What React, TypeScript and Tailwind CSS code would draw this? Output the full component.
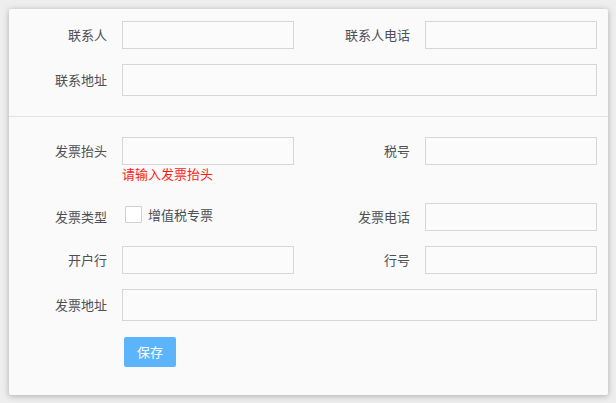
import { useState } from 'react'

const font = { fontFamily: '"Microsoft YaHei", "Noto Sans CJK SC", sans-serif' }

function Label({ text, w }: { text: string; w: string }) {
  return <label className={`${w} shrink-0 text-right text-[13px] text-[#4b4f56] pr-[15px]`}>{text}</label>
}

function Input({ wide }: { wide?: boolean }) {
  return (
    <input
      className={
        wide
          ? 'w-[475px] h-[32px] border border-[#d6d6d6] bg-[#fbfbfb] outline-none px-2 text-[13px]'
          : 'w-[172px] h-[28px] border border-[#d6d6d6] bg-[#fbfbfb] outline-none px-2 text-[13px]'
      }
    />
  )
}

export default function App() {
  const [vat, setVat] = useState(false)
  return (
    <div className="min-h-screen bg-[#eeeeee] p-[9px]" style={font}>
      <div className="w-[599px] bg-[#fafafa] rounded-[2px] shadow-[0_1px_6px_rgba(0,0,0,0.28)]">
        <div className="pt-[12px] pb-[20px] flex flex-col gap-[15px]">
          <div className="flex items-center">
            <Label text="联系人" w="w-[113px]" />
            <Input />
            <Label text="联系人电话" w="w-[131px]" />
            <Input />
          </div>
          <div className="flex items-center">
            <Label text="联系地址" w="w-[113px]" />
            <Input wide />
          </div>
        </div>
        <div className="h-px bg-[#e2e2e2]" />
        <div className="pt-[20px] pb-[28px] flex flex-col">
          <div className="flex items-start">
            <div className="flex items-center">
              <Label text="发票抬头" w="w-[113px]" />
              <div className="relative">
                <Input />
                <div className="absolute left-0 top-[27px] text-[13px] text-[#ff1a1a] whitespace-nowrap">请输入发票抬头</div>
              </div>
            </div>
            <div className="flex items-center">
              <Label text="税号" w="w-[131px]" />
              <Input />
            </div>
          </div>
          <div className="flex items-center mt-[38px]">
            <Label text="发票类型" w="w-[113px]" />
            <div className="w-[172px] flex items-center self-start mt-[2px] pl-[3px] gap-[6px]">
              <button
                onClick={() => setVat(!vat)}
                className="w-[17px] h-[17px] border border-[#cfcfcf] bg-white rounded-[1px]"
              />
              <span className="text-[13px] text-[#4b4f56]">增值税专票</span>
            </div>
            <Label text="发票电话" w="w-[131px]" />
            <Input />
          </div>
          <div className="flex items-center mt-[15px]">
            <Label text="开户行" w="w-[113px]" />
            <Input />
            <Label text="行号" w="w-[131px]" />
            <Input />
          </div>
          <div className="flex items-center mt-[15px]">
            <Label text="发票地址" w="w-[113px]" />
            <Input wide />
          </div>
          <div className="pl-[115px] mt-4">
            <button className="w-[52px] h-[30px] bg-[#5cb5fc] text-white text-[13px] rounded-[2px]">保存</button>
          </div>
        </div>
      </div>
    </div>
  )
}
